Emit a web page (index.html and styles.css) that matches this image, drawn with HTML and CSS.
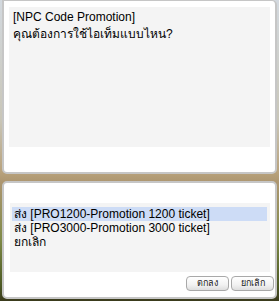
FILE: index.html
```html
<!DOCTYPE html>
<html>
<head>
<meta charset="utf-8">
<link rel="stylesheet" href="styles.css">
</head>
<body>
<div class="screen">
  <div class="panel panel-top">
    <div class="msg">
      <p class="line">[NPC Code Promotion]</p>
      <p class="line">คุณต้องการใช้ไอเท็มแบบไหน?</p>
    </div>
  </div>
  <div class="panel panel-bottom">
    <ul class="menu">
      <li class="item selected">ส่ง [PRO1200-Promotion 1200 ticket]</li>
      <li class="item">ส่ง [PRO3000-Promotion 3000 ticket]</li>
      <li class="item">ยกเลิก</li>
    </ul>
    <div class="buttons">
      <button class="btn">ตกลง</button>
      <button class="btn">ยกเลิก</button>
    </div>
  </div>
</div>
</body>
</html>
```
FILE: styles.css
```css
html, body {
  margin: 0;
  padding: 0;
}
body {
  width: 279px;
  height: 301px;
  overflow: hidden;
  background: linear-gradient(180deg, #d3d9df 0px, #c9c6b8 120px, #b8a27c 172px, #ad9670 182px, #7f8a48 240px, #4d5a24 285px, #3a3a1c 301px);
  font-family: "Liberation Sans", "DejaVu Sans", sans-serif;
  font-size: 12px;
  color: #000;
}
.screen {
  display: flex;
  flex-direction: column;
  gap: 7px;
  padding: 0 2px;
}
.panel {
  box-sizing: border-box;
  background: #fff;
  border: 2px solid #c6c6c6;
  border-radius: 5px;
}
.panel-top {
  height: 174px;
  border-top-width: 1px;
  border-top-left-radius: 0;
  padding: 6px 5px 0 5px;
}
.msg {
  height: 140px;
  background: #f4f4f4;
  padding: 2px 4px;
  box-sizing: border-box;
}
.line {
  margin: 0;
  line-height: 17px;
}
.panel-bottom {
  height: 118px;
  padding: 20px 5px 0 6px;
  display: flex;
  flex-direction: column;
}
.menu {
  list-style: none;
  margin: 0;
  padding: 4px 3px 0 2px;
  height: 69px;
  box-sizing: border-box;
  background: #f4f4f4;
}
.item {
  height: 14px;
  line-height: 14px;
  padding-left: 2px;
  white-space: nowrap;
}
.item.selected {
  background: #cddcf6;
}
.buttons {
  display: flex;
  justify-content: flex-end;
  gap: 2px;
  margin-top: 4px;
  margin-right: -4px;
}
.btn {
  box-sizing: border-box;
  width: 43px;
  height: 15px;
  padding: 0;
  border: 1px solid #a9a9a9;
  border-radius: 4px;
  background: linear-gradient(180deg, #ffffff 0%, #f2f2f2 60%, #dedede 100%);
  font-family: "Liberation Sans", "DejaVu Sans", sans-serif;
  font-size: 9px;
  line-height: 13px;
  color: #222;
}
```
